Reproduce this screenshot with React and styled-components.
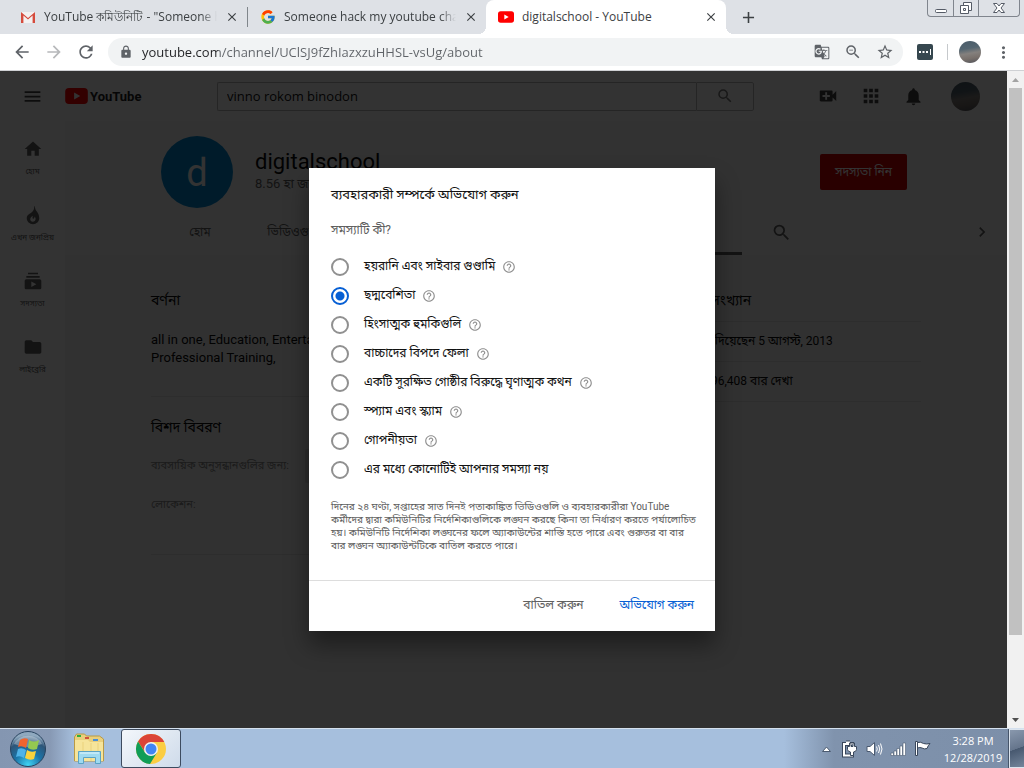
import React from 'react';
import styled, { createGlobalStyle } from 'styled-components';
import {
  MdApps, MdArrowBack, MdArrowForward, MdChevronRight, MdClose, MdFolder,
  MdGTranslate, MdHelpOutline, MdHome, MdLock, MdMenu, MdMoreVert, MdAdd,
  MdNotifications, MdRefresh, MdSearch, MdStarBorder, MdSubscriptions,
  MdVideoCall, MdZoomOut,
} from 'react-icons/md';
import { FcGoogle } from 'react-icons/fc';

const GlobalStyle = createGlobalStyle`
  * { box-sizing: border-box; }
  html, body, #root { height: 100%; }
  body {
    margin: 0;
    overflow: hidden;
    font-family: Roboto, "Noto Sans", "Noto Sans Bengali", sans-serif;
    font-size: 12px;
  }
  button, input { font: inherit; }
  button { border: 0; padding: 0; background: none; color: inherit; }
  a { color: inherit; text-decoration: none; }
  h1, h2, p, ul { margin: 0; padding: 0; font-weight: 400; list-style: none; }
  svg { display: block; flex: none; }
`;

const Desktop = styled.div`
  display: flex;
  flex-direction: column;
  height: 100vh;
`;

/* ---------- browser frame ---------- */

const TabStrip = styled.div`
  display: flex;
  height: 34px;
  background: #dee1e6;
  color: #3c4043;
  font-family: "Open Sans", "Noto Sans", sans-serif;
`;

const BrowserTab = styled.div`
  position: relative;
  display: flex;
  align-items: center;
  gap: 8px;
  flex: 0 1 ${p => (p.$active ? 240 : p.$width)}px;
  min-width: 0;
  padding: 0 8px 0 ${p => (p.$first ? 20 : 12)}px;
  background: ${p => (p.$active ? '#fff' : 'transparent')};
  border-radius: 8px 8px 0 0;

  &::before, &::after {
    content: "";
    display: ${p => (p.$active ? 'block' : 'none')};
    position: absolute;
    bottom: 0;
    width: 8px;
    height: 8px;
  }
  &::before { left: -8px; background: radial-gradient(circle at 0 0, #dee1e6 8px, #fff 8px); }
  &::after { right: -8px; background: radial-gradient(circle at 100% 0, #dee1e6 8px, #fff 8px); }
`;

const TabTitle = styled.span`
  flex: 1;
  height: 18px;
  overflow: hidden;
  line-height: 18px;
  white-space: nowrap;
  mask-image: ${p => (p.$fade ? 'linear-gradient(90deg, #000 calc(100% - 16px), transparent)' : 'none')};
`;

const TabClose = styled.button`
  color: #3c4043;
  stroke: currentColor;
`;

const TabDivider = styled.span`
  align-self: center;
  width: 1px;
  height: 20px;
  background: #80868b;
`;

const NewTab = styled.button`
  display: grid;
  place-items: center;
  width: 44px;
  color: #3c4043;
`;

const WindowButtons = styled.div`
  display: flex;
  height: 17px;
  margin: 0 4px 0 auto;
  border: 1px solid #80858d;
  border-top: 0;
  border-radius: 0 0 4px 4px;
`;

const WindowButton = styled.button`
  display: grid;
  place-items: center;
  width: ${p => (p.$wide ? 41 : 25)}px;
  border-left: ${p => (p.$first ? 0 : 1)}px solid #80858d;
`;

const AddressBar = styled.div`
  display: flex;
  align-items: center;
  height: 37px;
  padding: 0 5px 0 12px;
  background: #fff;
  border-bottom: 1px solid #cfd1d4;
  color: #5f6368;
`;

const NavButton = styled.button`
  display: grid;
  place-items: center;
  width: 32px;
  margin-left: ${p => (p.$first ? -6 : 0)}px;
  opacity: ${p => (p.disabled ? 0.45 : 1)};
`;

const Omnibox = styled.div`
  display: flex;
  align-items: center;
  flex: 1;
  height: 28px;
  margin-left: 6px;
  padding: 0 9px 0 11px;
  gap: 14px;
  border-radius: 14px;
  background: #f1f3f4;
`;

const UrlInput = styled.input`
  flex: 1;
  min-width: 0;
  margin-left: -5px;
  padding: 0;
  border: 0;
  outline: 0;
  background: linear-gradient(90deg, #202124 76px, #5f6368 76px);
  background-clip: text;
  color: transparent;
  font-family: "Open Sans", "Noto Sans", sans-serif;
  font-size: 13px;
`;

const Extension = styled.button`
  width: 16px;
  height: 16px;
  margin: 0 14px;
  border-radius: 2px;
  background: #36474f;
`;

const BarDivider = styled.span`
  width: 1px;
  height: 16px;
  background: #c6c9cc;
`;

const Profile = styled.button`
  margin: 0 6px 0 11px;
`;

const Photo = styled.span`
  display: block;
  width: ${p => p.$size}px;
  height: ${p => p.$size}px;
  border-radius: 50%;
  background: linear-gradient(170deg, #4a5c69 0%, #546570 35%, #84807d 55%, #78706b 75%, #50525a 100%);
`;

/* ---------- page ---------- */

const Viewport = styled.div`
  position: relative;
  display: flex;
  flex: 1;
  min-height: 0;
`;

const Page = styled.div`
  position: relative;
  flex: 1;
  min-width: 0;
  background: #f4f4f4;
  color: #0a0a0a;
`;

const Scrim = styled.div`
  position: absolute;
  inset: 0;
  background: rgba(0, 0, 0, 0.8);
`;

const Masthead = styled.header`
  display: flex;
  align-items: center;
  height: 50px;
  padding: 0 12px 0 22px;
  background: #fff;
  color: #444;
`;

const IconButton = styled.button`
  display: grid;
  place-items: center;
  width: ${p => p.$width || 43}px;
  height: 36px;
`;

const Logo = styled.a`
  display: flex;
  align-items: center;
  flex: none;
  gap: 2px;
  width: 72px;
  margin-left: 22px;
  color: #222;
  font-size: 13px;
  font-weight: 700;
`;

const SearchForm = styled.form`
  display: flex;
  flex: 0 1 537px;
  height: 29px;
  margin: 0 auto 0 80px;
`;

const SearchInput = styled.input`
  flex: 1;
  min-width: 0;
  padding: 0 9px;
  border: 1px solid #bbb;
  border-right: 0;
  border-radius: 2px 0 0 2px;
  background: transparent;
  color: #111;
  font-family: "Open Sans", "Noto Sans", sans-serif;
  font-size: 13px;
`;

const SearchButton = styled.button`
  display: grid;
  place-items: center;
  width: 58px;
  border: 1px solid #bbb;
  border-radius: 0 2px 2px 0;
  color: #777;
`;

const Columns = styled.div`
  display: flex;
  height: calc(100% - 50px);
`;

const MiniGuide = styled.nav`
  display: flex;
  flex-direction: column;
  width: 65px;
  background: #fff;
  color: #606060;
`;

const GuideItem = styled.a`
  display: flex;
  flex-direction: column;
  align-items: center;
  height: 66px;
  padding-top: 18px;
  gap: 4px;
  font-size: 8px;
  line-height: 18px;
  white-space: nowrap;
`;

const Channel = styled.main`
  flex: 1;
  min-width: 0;
`;

const ChannelHeader = styled.div`
  height: 134px;
  padding: 15px 14px 0 95px;
  background: #fafafa;
`;

const Identity = styled.div`
  display: flex;
  height: 73px;
  padding-right: 86px;
`;

const ChannelAvatar = styled.div`
  width: 72px;
  height: 72px;
  margin: 0 22px 0 1px;
  border-radius: 50%;
  background: #0288d1;
  color: #fff;
  font-size: 38px;
  line-height: 74px;
  text-align: center;
`;

const ChannelName = styled.h1`
  margin-top: 12px;
  font-size: 22px;
  line-height: 27px;
`;

const Subscribers = styled.p`
  color: #606060;
  font-size: 13px;
  line-height: 18px;
`;

const Subscribe = styled.button`
  width: 87px;
  height: 36px;
  margin: 18px 0 0 auto;
  border-radius: 2px;
  background: #c00;
  color: #fff;
  line-height: 32px;
`;

const ChannelTabs = styled.div`
  display: flex;
  align-items: center;
  height: 46px;
  color: #606060;
`;

const TabGrid = styled.nav`
  display: grid;
  grid-template: 46px / 80px 108px repeat(4, 1fr);
  flex: 0 1 582px;
`;

const ChannelTab = styled.a`
  text-align: center;
  line-height: 46px;
  border-bottom: 3px solid ${p => (p.$active ? '#606060' : 'transparent')};
`;

const Spacer = styled.span`
  flex: 1;
`;

const About = styled.div`
  display: grid;
  grid-template-columns: minmax(0, 1fr) 232px;
  gap: 24px;
  padding: 34px 86px 0;
`;

const Section = styled.section`
  height: ${p => p.$height}px;
  padding-top: ${p => p.$top || 0}px;
  border-bottom: 1px solid #e2e2e2;
`;

const Heading = styled.h2`
  font-size: 14px;
  line-height: 22px;
  padding-bottom: ${p => p.$gap || 0}px;
`;

const Description = styled.p`
  width: 240px;
  font-size: 13px;
  line-height: 18px;
`;

const Detail = styled.div`
  display: flex;
  align-items: center;
  height: 39px;
  color: #888;
  font-size: 11px;
`;

const DetailLabel = styled.span`
  width: 154px;
`;

const EmailButton = styled.button`
  width: 150px;
  height: 34px;
  border-radius: 2px;
  background: #dcdcdc;
`;

const Stat = styled.p`
  height: 40px;
  padding-left: ${p => p.$indent || 0}px;
  border-bottom: 1px solid #e2e2e2;
  line-height: 38px;
`;

const Scrollbar = styled.div`
  display: flex;
  flex-direction: column;
  align-items: center;
  justify-content: space-between;
  width: 17px;
  background: #f1f1f1;
`;

const Arrow = styled.button`
  display: grid;
  place-items: center;
  width: 17px;
  height: 17px;
  color: ${p => p.$color};
`;

const Thumb = styled.div`
  width: 13px;
  height: 547px;
  margin-bottom: auto;
  background: #c1c1c1;
`;

/* ---------- dialog ---------- */

const DialogLayer = styled.div`
  position: absolute;
  inset: 0;
  display: grid;
  place-items: center;
`;

const Dialog = styled.form`
  width: 406px;
  background: #fff;
  box-shadow: 0 14px 22px rgba(0, 0, 0, 0.4);
  color: #111;
`;

const DialogBody = styled.div`
  padding: 16px 22px 28px;
`;

const DialogTitle = styled.h2`
  font-size: 13px;
  line-height: 22px;
`;

const Question = styled.p`
  padding: 13px 0 11px;
  color: #606060;
  line-height: 22px;
`;

const Option = styled.div`
  display: flex;
  align-items: center;
  height: 29px;

  label { padding-left: 15px; white-space: nowrap; }
  svg { margin-left: 7px; color: #909090; }
`;

const Radio = styled.input`
  appearance: none;
  width: 18px;
  height: 18px;
  margin: 0;
  border: 2px solid #909090;
  border-radius: 50%;

  &:checked {
    border-color: #065fd4;
    background: radial-gradient(circle, #065fd4 4px, #fff 5px);
  }
`;

const Note = styled.p`
  padding-top: 16px;
  color: #606060;
  font-size: 10px;
  line-height: 13px;
  white-space: nowrap;
`;

const DialogFooter = styled.div`
  display: flex;
  justify-content: flex-end;
  align-items: center;
  gap: 36px;
  height: 51px;
  padding: 0 21px;
  border-top: 1px solid #ddd;
`;

const DialogButton = styled.button`
  color: ${p => (p.$primary ? '#065fd4' : '#606060')};
`;

/* ---------- taskbar ---------- */

const Taskbar = styled.footer`
  display: flex;
  align-items: center;
  height: 40px;
  padding-left: 8px;
  border-top: 1px solid #d4e0ee;
  box-shadow: 0 -1px #3a4a60;
  background: linear-gradient(90deg, #8496b1 0, #8799b4 50px, #a6bfdd 75px, #a6bfdd calc(100% - 240px), #8093ad calc(100% - 190px), #7c8fa9 100%);
  font-family: "Open Sans", "Noto Sans", sans-serif;
`;

const TaskButton = styled.button`
  display: grid;
  place-items: center;
  width: ${p => p.$width}px;
  height: 39px;
  padding-left: ${p => p.$inset || 0}px;
  border: 1px solid ${p => (p.$active ? '#3d4b5f' : 'transparent')};
  border-radius: 3px;
  background: ${p => (p.$active ? 'linear-gradient(135deg, #f3f7fb, #cfdbea)' : 'none')};
`;

const Tray = styled.div`
  display: flex;
  align-items: center;
  gap: 6px;
  margin-left: auto;
`;

const TrayButton = styled.button`
  display: grid;
  place-items: center;
  width: 18px;
  height: 24px;
`;

const Clock = styled.div`
  width: 72px;
  color: #fff;
  font-size: 11px;
  line-height: 17px;
  text-align: center;
`;

const ShowDesktop = styled.button`
  width: 15px;
  height: 39px;
  border: 1px solid #dbe4ee;
  border-right: 0;
  box-shadow: -1px 0 #46556a;
  background: linear-gradient(160deg, #8998ad 0, #65758c 50%, #47586f 51%, #74859b 100%);
`;

/* ---------- drawings ---------- */

const GmailIcon = () => (
  <svg width="16" height="16" viewBox="0 0 16 16">
    <path d="M1 3h14v11H1z" fill="#f3f1f1" />
    <path d="M1 14V3l7 6 7-6v11h-2.400V6.500L8 10.500 3.400 6.500V14z" fill="#d54b3d" />
  </svg>
);

const YouTubeMark = ({ width, height }) => (
  <svg width={width} height={height} viewBox="0 0 24 17">
    <rect width="24" height="17" rx="4" fill="#f00" />
    <path d="M9.500 4.800v7.400l6.500-3.700z" fill="#fff" />
  </svg>
);

const FlameIcon = ({ size }) => (
  <svg width={size} height={size} viewBox="0 0 24 24" fill="currentColor">
    <path d="M13.200 1c.6 3.400-.3 5.200-2 7.200C8.500 10.800 4.500 11.500 4.500 16c0 3.900 3.300 7 7.500 7s7.500-3.100 7.500-7c0-6-3.500-8-4.500-10.500C14.600 4 14.300 2.200 13.200 1zM11.700 20c-1.700 0-3-1.300-3-3 0-2 1.600-2.800 2.800-4.200.4 1.800-.6 2.600.2 3.500 1 .9 2.400-.8 2.200-2.500 1 1.200 1.200 2 1.200 3 0 1.800-1.500 3.200-3.400 3.200z" />
  </svg>
);

const MinimizeIcon = () => (
  <svg width="14" height="14" viewBox="0 0 14 14" fill="#fff" stroke="#555b66">
    <rect x="1.500" y="8.500" width="11" height="3" rx="1" />
  </svg>
);

const RestoreIcon = () => (
  <svg width="14" height="14" viewBox="0 0 14 14" fill="#fff" stroke="#555b66">
    <path d="M4.500 1.500h8v8h-8z" />
    <path d="M1.500 4.500h8v8h-8z" />
    <path d="M4.500 7.500h2v2h-2z" />
  </svg>
);

const CrossIcon = () => (
  <svg width="14" height="14" viewBox="0 0 14 14" fill="#fff" stroke="#555b66">
    <path d="M1.500 2.500h3.500l2 2.500 2-2.500h3.500L9 7l3.500 4.500H9L7 9l-2 2.500H1.500L5 7z" />
  </svg>
);

const DotsIcon = () => (
  <svg width="16" height="16" viewBox="0 0 16 16" fill="#fff">
    <path d="M2 7h2v2H2zM5.500 7h2v2h-2zM9 7h2v2H9zM13 5h1v6h-1z" />
  </svg>
);

const OrbIcon = () => (
  <svg width="38" height="38" viewBox="0 0 38 38">
    <defs>
      <radialGradient id="orb" cx="50%" cy="95%" r="85%">
        <stop offset="0" stopColor="#3fd4f4" />
        <stop offset="0.450" stopColor="#1b74a8" />
        <stop offset="0.800" stopColor="#2d5578" />
        <stop offset="1" stopColor="#8fa9bf" />
      </radialGradient>
    </defs>
    <circle cx="19" cy="19" r="17.500" fill="url(#orb)" stroke="#28435f" />
    <path d="M5 14a15 13 0 0 1 28 0Q19 20 5 14z" fill="#fff" opacity=".3" />
    <path d="M11 10q4-3 8-1l-2 9q-4-3-8-1z" fill="#f0642f" />
    <path d="M20 10q5 3 10 0l-2 9q-5 2-9-1z" fill="#94c850" />
    <path d="M9 19q4-2 8 1l-2 8q-4-3-8-1z" fill="#4fb3e8" />
    <path d="M18 20q4 3 9 1l-2 8q-4 2-9-1z" fill="#fbd23c" />
  </svg>
);

const ExplorerIcon = () => (
  <svg width="34" height="34" viewBox="0 0 34 34">
    <path d="M2.500 5l2-3h8l2 2h13l4 3v22h-29z" fill="#e9cf7c" stroke="#b99a45" />
    <path d="M5 3h4v2H5z" fill="#2fae3e" />
    <path d="M13 5h4v2h-4z" fill="#d1513a" />
    <path d="M21 7h5v2h-5z" fill="#4a8fd6" />
    <path d="M3 8h13l2 2h13v19H3z" fill="#f6e49a" />
    <path d="M11 10v19M19 11v18M26 11v18" stroke="#ead27c" />
    <path d="M6.500 31.500V19.500h22v12h-5v-6h-12v6z" fill="#9fdaf0" stroke="#5ba3c4" />
    <path d="M8 21h19" stroke="#e4f7fd" />
  </svg>
);

const ChromeIcon = () => (
  <svg width="32" height="32" viewBox="0 0 32 32">
    <circle cx="16" cy="16" r="15" fill="#fbcd42" />
    <path d="M16 9h13.300A15 15 0 0 0 3 8.500L10 19z" fill="#db4437" />
    <path d="M3 8.500A15 15 0 0 0 15 31l7-11.500H10z" fill="#0f9d58" />
    <circle cx="16" cy="16" r="7" fill="#f1f1f1" />
    <circle cx="16" cy="16" r="5.500" fill="#4285f4" />
  </svg>
);

const TriangleIcon = ({ down }) => (
  <svg width="7" height="4" viewBox="0 0 7 4" fill="currentColor">
    <path d={down ? 'M0 0h7L3.500 4z' : 'M0 4h7L3.500 0z'} />
  </svg>
);

const TrayUp = () => (
  <svg width="9" height="6" viewBox="0 0 9 6">
    <path d="M.5 5.500h8L4.500 1z" fill="#fff" stroke="#4b5a70" />
  </svg>
);

const BatteryIcon = () => (
  <svg width="16" height="18" viewBox="0 0 16 18">
    <path d="M4 2.500h4M10 4.500V4H2v11.500h8V13" fill="none" stroke="#39475b" strokeWidth="4" />
    <path d="M4 2.500h4M10 4.500V4H2v11.500h8V13" fill="none" stroke="#fff" strokeWidth="2" />
    <path d="M7.500 3v3.500h-2v3q0 2 3 2.500v3.500h3V12q3-.5 3-2.500v-3h-2V3h-1.500v3.500H9V3z" fill="#fff" stroke="#39475b" />
  </svg>
);

const SpeakerIcon = () => (
  <svg width="17" height="16" viewBox="0 0 17 16">
    <path d="M1 5.500h3l4.500-4v13l-4.500-4H1z" fill="#fff" stroke="#4b5a70" />
    <path d="M10.500 5.500q1.500 2.500 0 5M12.500 4q2.500 4 0 8M14.500 2.500q3 5.500 0 11" fill="none" stroke="#fff" />
  </svg>
);

const SignalIcon = () => (
  <svg width="17" height="14" viewBox="0 0 17 14" fill="#fff" stroke="#4b5a70" strokeWidth=".6">
    <path d="M1 11h2.500v2.500H1zM4 9h2.500v4.500H4zM7 6.500h2.500v7H7zM10 4h2.500v9.500H10zM13 1h2.500v12.500H13z" />
  </svg>
);

const FlagIcon = () => (
  <svg width="17" height="17" viewBox="0 0 17 17" fill="#fff" stroke="#39475b">
    <path d="M1.500 1.500h2v14h-2z" />
    <path d="M3.500 2.500q3-1 6 1 3 1 6.500 0-2 2-3 5-3 1-5-.5-2-1-4.500 0z" />
  </svg>
);

/* ---------- data ---------- */

const guide = [
  { label: 'হোম', Icon: MdHome },
  { label: 'এখন জনপ্রিয়', Icon: FlameIcon },
  { label: 'সদস্যতা', Icon: MdSubscriptions },
  { label: 'লাইব্রেরি', Icon: MdFolder },
];

const channelTabs = ['হোম', 'ভিডিওগুলি', 'প্লেলিস্ট', 'চ্যানেল', 'আলোচনা', 'সম্পর্কে'];

const reasons = [
  'হয়রানি এবং সাইবার গুণ্ডামি',
  'ছদ্মবেশিতা',
  'হিংসাত্মক হুমকিগুলি',
  'বাচ্চাদের বিপদে ফেলা',
  'একটি সুরক্ষিত গোষ্ঠীর বিরুদ্ধে ঘৃণাত্মক কথন',
  'স্প্যাম এবং স্ক্যাম',
  'গোপনীয়তা',
  'এর মধ্যে কোনোটিই আপনার সমস্যা নয়',
];

const BrowserFrame = () => (
  <>
    <TabStrip>
      <BrowserTab $width={247} $first>
        <GmailIcon />
        <TabTitle $fade>YouTube কমিউনিটি - "Someone ha</TabTitle>
        <TabClose aria-label="Close tab"><MdClose size={14} /></TabClose>
      </BrowserTab>
      <TabDivider />
      <BrowserTab $width={238}>
        <FcGoogle size={16} />
        <TabTitle $fade>Someone hack my youtube chann</TabTitle>
        <TabClose aria-label="Close tab"><MdClose size={14} /></TabClose>
      </BrowserTab>
      <BrowserTab $active>
        <YouTubeMark width={16} height={12} />
        <TabTitle>digitalschool - YouTube</TabTitle>
        <TabClose aria-label="Close tab"><MdClose size={14} /></TabClose>
      </BrowserTab>
      <NewTab aria-label="New tab"><MdAdd size={19} /></NewTab>
      <WindowButtons>
        <WindowButton $first aria-label="Minimize"><MinimizeIcon /></WindowButton>
        <WindowButton aria-label="Restore"><RestoreIcon /></WindowButton>
        <WindowButton $wide aria-label="Close"><CrossIcon /></WindowButton>
      </WindowButtons>
    </TabStrip>
    <AddressBar>
      <NavButton $first aria-label="Back"><MdArrowBack size={20} /></NavButton>
      <NavButton disabled aria-label="Forward"><MdArrowForward size={20} /></NavButton>
      <NavButton aria-label="Reload"><MdRefresh size={20} /></NavButton>
      <Omnibox>
        <MdLock size={14} />
        <UrlInput aria-label="Address" defaultValue="youtube.com/channel/UClSJ9fZhIazxzuHHSL-vsUg/about" />
        <MdGTranslate size={16} />
        <MdZoomOut size={18} />
        <MdStarBorder size={18} />
      </Omnibox>
      <Extension aria-label="Extension"><DotsIcon /></Extension>
      <BarDivider />
      <Profile aria-label="Profile"><Photo $size={22} /></Profile>
      <NavButton aria-label="Menu"><MdMoreVert size={19} /></NavButton>
    </AddressBar>
  </>
);

const ChannelPage = () => (
  <Page>
    <Masthead>
      <IconButton $width={21} aria-label="Guide"><MdMenu size={21} /></IconButton>
      <Logo href="#">
        <YouTubeMark width={23} height={16} />
        YouTube
      </Logo>
      <SearchForm>
        <SearchInput aria-label="Search" defaultValue="vinno rokom binodon" />
        <SearchButton type="button" aria-label="Search"><MdSearch size={18} /></SearchButton>
      </SearchForm>
      <IconButton aria-label="Create"><MdVideoCall size={22} /></IconButton>
      <IconButton aria-label="Apps"><MdApps size={22} /></IconButton>
      <IconButton aria-label="Notifications"><MdNotifications size={21} /></IconButton>
      <IconButton $width={60} aria-label="Account"><Photo $size={29} /></IconButton>
    </Masthead>
    <Columns>
      <MiniGuide>
        {guide.map(({ label, Icon }) => (
          <GuideItem href="#" key={label}>
            <Icon size={20} />
            {label}
          </GuideItem>
        ))}
      </MiniGuide>
      <Channel>
        <ChannelHeader>
          <Identity>
            <ChannelAvatar>d</ChannelAvatar>
            <div>
              <ChannelName>digitalschool</ChannelName>
              <Subscribers>8.56 হা জন সদস্য</Subscribers>
            </div>
            <Subscribe>সদস্যতা নিন</Subscribe>
          </Identity>
          <ChannelTabs>
            <TabGrid>
              {channelTabs.map((name, i) => (
                <ChannelTab href="#" key={name} $active={i === 5}>{name}</ChannelTab>
              ))}
            </TabGrid>
            <IconButton $width={78} aria-label="Search channel"><MdSearch size={21} /></IconButton>
            <Spacer />
            <IconButton $width={22} aria-label="Next tabs"><MdChevronRight size={20} /></IconButton>
          </ChannelTabs>
        </ChannelHeader>
        <About>
          <div>
            <Section $height={108}>
              <Heading $gap={20}>বর্ণনা</Heading>
              <Description>all in one, Education, Entertainment, Professional Training,</Description>
            </Section>
            <Section $height={158} $top={19}>
              <Heading $gap={8}>বিশদ বিবরণ</Heading>
              <Detail>
                <DetailLabel>ব্যবসায়িক অনুসন্ধানগুলির জন্য:</DetailLabel>
                <EmailButton aria-label="Email" />
              </Detail>
              <Detail>লোকেশন:</Detail>
            </Section>
          </div>
          <div>
            <Section $height={33}><Heading>পরিসংখ্যান</Heading></Section>
            <Stat>যোগ দিয়েছেন 5 আগস্ট, 2013</Stat>
            <Stat $indent={22}>96,408 বার দেখা</Stat>
          </div>
        </About>
      </Channel>
    </Columns>
    <Scrim />
  </Page>
);

const ReportDialog = () => (
  <DialogLayer>
    <Dialog role="dialog" aria-labelledby="report-title">
      <DialogBody>
        <DialogTitle id="report-title">ব্যবহারকারী সম্পর্কে অভিযোগ করুন</DialogTitle>
        <Question>সমস্যাটি কী?</Question>
        {reasons.map((reason, i) => (
          <Option key={reason}>
            <Radio type="radio" name="reason" id={`reason-${i}`} defaultChecked={i === 1} />
            <label htmlFor={`reason-${i}`}>{reason}</label>
            {i < reasons.length - 1 && <MdHelpOutline size={14} />}
          </Option>
        ))}
        <Note>
          দিনের ২৪ ঘণ্টা, সপ্তাহের সাত দিনই পতাকাঙ্কিত ভিডিওগুলি ও ব্যবহারকারীরা YouTube<br />
          কর্মীদের দ্বারা কমিউনিটির নির্দেশিকাগুলিকে লঙ্ঘন করছে কিনা তা নির্ধারণ করতে পর্যালোচিত<br />
          হয়। কমিউনিটি নির্দেশিকা লঙ্ঘনের ফলে অ্যাকাউন্টের শাস্তি হতে পারে এবং গুরুতর বা বার<br />
          বার লঙ্ঘন অ্যাকাউন্টটিকে বাতিল করতে পারে।
        </Note>
      </DialogBody>
      <DialogFooter>
        <DialogButton type="button">বাতিল করুন</DialogButton>
        <DialogButton type="button" $primary>অভিযোগ করুন</DialogButton>
      </DialogFooter>
    </Dialog>
  </DialogLayer>
);

const WindowsTaskbar = () => (
  <Taskbar>
    <TaskButton $width={38} aria-label="Start"><OrbIcon /></TaskButton>
    <TaskButton $width={75} $inset={10} aria-label="Explorer"><ExplorerIcon /></TaskButton>
    <TaskButton $width={60} $active aria-label="Chrome"><ChromeIcon /></TaskButton>
    <Tray>
      <TrayButton aria-label="Show hidden icons"><TrayUp /></TrayButton>
      <TrayButton aria-label="Battery"><BatteryIcon /></TrayButton>
      <TrayButton aria-label="Volume"><SpeakerIcon /></TrayButton>
      <TrayButton aria-label="Network"><SignalIcon /></TrayButton>
      <TrayButton aria-label="Action center"><FlagIcon /></TrayButton>
      <Clock>3:28 PM<br />12/28/2019</Clock>
    </Tray>
    <ShowDesktop aria-label="Show desktop" />
  </Taskbar>
);

const App = () => (
  <Desktop>
    <GlobalStyle />
    <BrowserFrame />
    <Viewport>
      <ChannelPage />
      <Scrollbar>
        <Arrow $color="#a3a3a3" aria-label="Scroll up"><TriangleIcon /></Arrow>
        <Thumb />
        <Arrow $color="#505050" aria-label="Scroll down"><TriangleIcon down /></Arrow>
      </Scrollbar>
      <ReportDialog />
    </Viewport>
    <WindowsTaskbar />
  </Desktop>
);

export default App;
